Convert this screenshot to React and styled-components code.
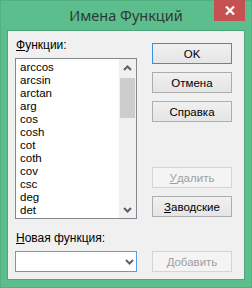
import styled, { createGlobalStyle } from "styled-components";

const Global = createGlobalStyle`
  html, body { margin: 0; padding: 0; background: #5cbd8d; }
  body { font-family: "Liberation Sans", Arial, sans-serif; }
`;

const Frame = styled.div`
  width: 252px;
  height: 288px;
  box-sizing: border-box;
  background: #5cbd8d;
  border: 1px solid #52b080;
  display: flex;
  flex-direction: column;
`;

const TitleBar = styled.div`
  height: 29px;
  display: flex;
  align-items: flex-start;
  position: relative;
`;

const Title = styled.div`
  flex: 1;
  text-align: center;
  font-family: "Noto Sans", "Open Sans", sans-serif;
  font-size: 14.5px;
  line-height: 29px;
  color: #2e3a35;
`;

const Close = styled.div`
  position: absolute;
  top: -1px;
  right: 6px;
  width: 31px;
  height: 21px;
  background: #c75050;
  display: flex;
  align-items: center;
  justify-content: center;
`;

const Client = styled.div`
  margin: 0 6px 0 6px;
  height: 250px;
  box-sizing: border-box;
  background: #f0f0f0;
  border: 1px solid #4fa67b;
  display: flex;
  padding: 0 0 0 7px;
  gap: 15px;
  color: #000;
`;

const LeftCol = styled.div`
  width: 122px;
  display: flex;
  flex-direction: column;
  padding-top: 8px;
`;

const Label = styled.div`
  height: 13px;
  line-height: 13px;
  font-size: 12px;
  margin-left: 1px;
  margin-bottom: ${(p) => p.$mb}px;
  margin-top: ${(p) => p.$mt || 0}px;
`;

const U = styled.span`
  text-decoration: underline;
  text-underline-offset: 1px;
`;

const ListBox = styled.div`
  height: 161px;
  box-sizing: border-box;
  border: 1px solid #828790;
  background: #fff;
  display: flex;
  overflow: hidden;
`;

const Items = styled.div`
  flex: 1;
  padding: 2px 0 0 4px;
  overflow: hidden;
`;

const Item = styled.div`
  height: 13px;
  line-height: 13px;
  font-size: 11.5px;
`;

const ScrollBar = styled.div`
  width: 17px;
  background: #f0f0f0;
  display: flex;
  flex-direction: column;
`;

const ArrowBtn = styled.div`
  height: 17px;
  display: flex;
  align-items: center;
  justify-content: center;
`;

const Thumb = styled.div`
  margin: 2px 1px 0 1px;
  height: 40px;
  background: #cdcdcd;
`;

const Track = styled.div`
  flex: 1;
`;

const Combo = styled.div`
  height: 21px;
  box-sizing: border-box;
  border: 1px solid #569de5;
  background: #fff;
  display: flex;
  align-items: center;
  justify-content: flex-end;
  padding-right: 2px;
`;

const RightCol = styled.div`
  width: 80px;
  display: flex;
  flex-direction: column;
  padding-top: 12px;
`;

const Button = styled.div`
  height: 21px;
  box-sizing: border-box;
  border: 1px solid ${(p) => (p.$default ? "#3c8ee0" : p.$disabled ? "#d5d5d5" : "#adadad")};
  background: ${(p) =>
    p.$disabled ? "#f4f4f4" : "linear-gradient(#f0f0f0, #e5e5e5)"};
  color: ${(p) => (p.$disabled ? "#a0a0a0" : "#000")};
  font-size: 11.5px;
  display: flex;
  align-items: center;
  justify-content: center;
  margin-top: ${(p) => p.$mt}px;
`;

const Chevron = ({ up }) => (
  <svg width="9" height="6" viewBox="0 0 9 6">
    <path
      d={up ? "M1 5 L4.5 1.5 L8 5" : "M1 1 L4.5 4.5 L8 1"}
      fill="none"
      stroke="#606060"
      strokeWidth="2"
    />
  </svg>
);

const items = ["arccos", "arcsin", "arctan", "arg", "cos", "cosh", "cot", "coth", "cov", "csc", "deg", "det"];

export default function App() {
  return (
    <>
      <Global />
      <Frame>
        <TitleBar>
          <Title>Имена Функций</Title>
          <Close>
            <svg width="10" height="9" viewBox="0 0 10 9">
              <path d="M1 0.5 L9 8.5 M9 0.5 L1 8.5" stroke="#fff" strokeWidth="2.2" />
            </svg>
          </Close>
        </TitleBar>
        <Client>
          <LeftCol>
            <Label $mb={6}>
              <U>Ф</U>ункции:
            </Label>
            <ListBox>
              <Items>
                {items.map((it) => (
                  <Item key={it}>{it}</Item>
                ))}
              </Items>
              <ScrollBar>
                <ArrowBtn>
                  <Chevron up />
                </ArrowBtn>
                <Thumb />
                <Track />
                <ArrowBtn>
                  <Chevron />
                </ArrowBtn>
              </ScrollBar>
            </ListBox>
            <Label $mt={13} $mb={6}>
              <U>Н</U>овая функция:
            </Label>
            <Combo>
              <Chevron />
            </Combo>
          </LeftCol>
          <RightCol>
            <Button $default $mt={0}>OK</Button>
            <Button $mt={8}>Отмена</Button>
            <Button $mt={8}>Справка</Button>
            <Button $disabled $mt={45}>
              <U>У</U>далить
            </Button>
            <Button $mt={8}>
              <U>З</U>аводские
            </Button>
            <Button $disabled $mt={34}>
              <U>Д</U>обавить
            </Button>
          </RightCol>
        </Client>
      </Frame>
    </>
  );
}
